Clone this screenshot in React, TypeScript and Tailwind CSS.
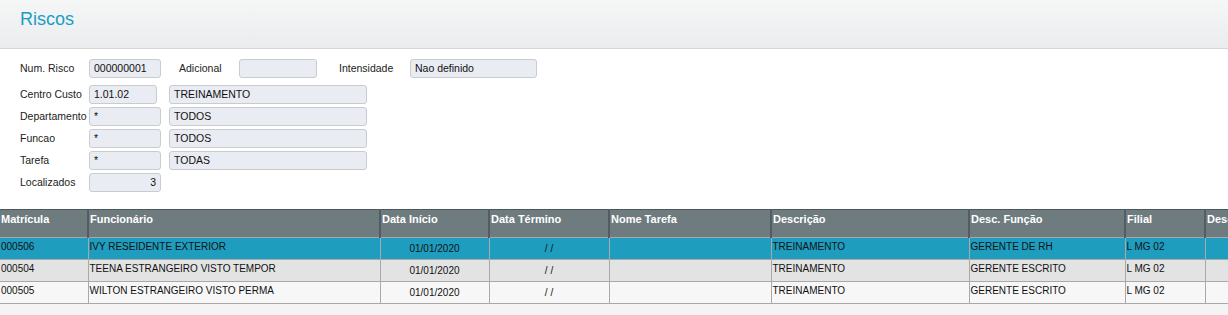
const rows = [
  { mat: '000506', nome: 'IVY RESEIDENTE EXTERIOR', ini: '01/01/2020', fim: '/ /', tarefa: '', desc: 'TREINAMENTO', funcao: 'GERENTE DE RH', filial: 'L MG 02' },
  { mat: '000504', nome: 'TEENA ESTRANGEIRO VISTO TEMPOR', ini: '01/01/2020', fim: '/ /', tarefa: '', desc: 'TREINAMENTO', funcao: 'GERENTE ESCRITO', filial: 'L MG 02' },
  { mat: '000505', nome: 'WILTON ESTRANGEIRO VISTO PERMA', ini: '01/01/2020', fim: '/ /', tarefa: '', desc: 'TREINAMENTO', funcao: 'GERENTE ESCRITO', filial: 'L MG 02' },
];

const cols = [
  { label: 'Matrícula', w: 88 },
  { label: 'Funcionário', w: 292 },
  { label: 'Data Início', w: 109 },
  { label: 'Data Término', w: 120 },
  { label: 'Nome Tarefa', w: 162 },
  { label: 'Descrição', w: 198 },
  { label: 'Desc. Função', w: 156 },
  { label: 'Filial', w: 80 },
  { label: 'Desc. Filial', w: 120 },
];

function Field({ value, className = '', right = false }: { value: string; className?: string; right?: boolean }) {
  return (
    <div
      className={`h-[19px] shrink-0 whitespace-nowrap rounded-[3px] border border-[#c9cbcf] bg-[#e9ecf2] px-[4px] text-[10.5px] leading-[17px] text-[#111] ${right ? 'text-right' : ''} ${className}`}
    >
      {value}
    </div>
  );
}

function Label({ children, className = 'w-[69px]' }: { children: string; className?: string }) {
  return <div className={`shrink-0 whitespace-nowrap text-[10.5px] leading-[15px] text-[#222] ${className}`}>{children}</div>;
}

export default function App() {
  const rowBg = ['bg-[#1e9dbf]', 'bg-[#e3e3e3]', 'bg-[#f7f7f7]'];
  const cell = 'border-l border-[#a9a9a9] px-[1px] pt-[2px] align-top leading-[14px] text-[10px] text-[#111] whitespace-nowrap overflow-hidden';

  return (
    <div className="w-[1228px] h-[315px] overflow-hidden bg-[#f4f4f4]" style={{ fontFamily: '"Liberation Sans", Arial, sans-serif' }}>
      {/* Header */}
      <div className="h-[49px] border-b border-[#d6d6d6] bg-gradient-to-b from-[#f5f6f6] to-[#ebecee] pl-[20px] pt-[8px]">
        <h1 className="text-[18px] leading-[23px] text-[#1a9dc4]">Riscos</h1>
      </div>

      {/* Form */}
      <div className="h-[160px] bg-white pl-[20px] pt-[10px]">
        <div className="flex items-center">
          <Label>Num. Risco</Label>
          <Field value="000000001" className="w-[72px]" />
          <Label className="ml-[18px] w-[60px]">Adicional</Label>
          <Field value="" className="w-[78px]" />
          <Label className="ml-[22px] w-[71px]">Intensidade</Label>
          <Field value="Nao definido" className="w-[127px]" />
        </div>
        <div className="mt-[7px] flex flex-col gap-[3px]">
          <div className="flex items-center">
            <Label>Centro Custo</Label>
            <Field value="1.01.02" className="w-[68px]" />
            <Field value="TREINAMENTO" className="ml-[12px] w-[198px]" />
          </div>
          <div className="flex items-center">
            <Label>Departamento</Label>
            <Field value="*" className="w-[72px]" />
            <Field value="TODOS" className="ml-[8px] w-[198px]" />
          </div>
          <div className="flex items-center">
            <Label>Funcao</Label>
            <Field value="*" className="w-[72px]" />
            <Field value="TODOS" className="ml-[8px] w-[198px]" />
          </div>
          <div className="flex items-center">
            <Label>Tarefa</Label>
            <Field value="*" className="w-[72px]" />
            <Field value="TODAS" className="ml-[8px] w-[198px]" />
          </div>
          <div className="flex items-center">
            <Label>Localizados</Label>
            <Field value="3" right className="w-[72px]" />
          </div>
        </div>
      </div>

      {/* Grid */}
      <table className="table-fixed border-collapse" style={{ width: cols.reduce((s, c) => s + c.w, 0) }}>
        <colgroup>
          {cols.map((c) => (
            <col key={c.label} style={{ width: c.w }} />
          ))}
        </colgroup>
        <thead>
          <tr className="h-[28px] border-t border-[#4d5759] bg-[#6e7b7f]">
            {cols.map((c, i) => (
              <th
                key={c.label}
                className={`${i > 0 ? 'border-l-2 border-l-[#535d60]' : ''} whitespace-nowrap overflow-hidden px-[1px] pt-[2px] align-top text-left text-[11px] font-bold leading-[14px] text-white`}
              >
                {c.label}
              </th>
            ))}
          </tr>
        </thead>
        <tbody>
          {rows.map((r, ri) => (
            <tr key={r.mat} className={`h-[22px] border-t border-[#a9a9a9] ${ri === rows.length - 1 ? 'border-b' : ''} ${rowBg[ri]}`}>
              <td className={`${cell} border-l-0`}>{r.mat}</td>
              <td className={cell}>{r.nome}</td>
              <td className={`${cell} pt-[4px] text-center`}>{r.ini}</td>
              <td className={`${cell} pt-[4px] text-center`}>{r.fim}</td>
              <td className={cell}>{r.tarefa}</td>
              <td className={cell}>{r.desc}</td>
              <td className={cell}>{r.funcao}</td>
              <td className={cell}>{r.filial}</td>
              <td className={cell}></td>
            </tr>
          ))}
        </tbody>
      </table>
    </div>
  );
}
